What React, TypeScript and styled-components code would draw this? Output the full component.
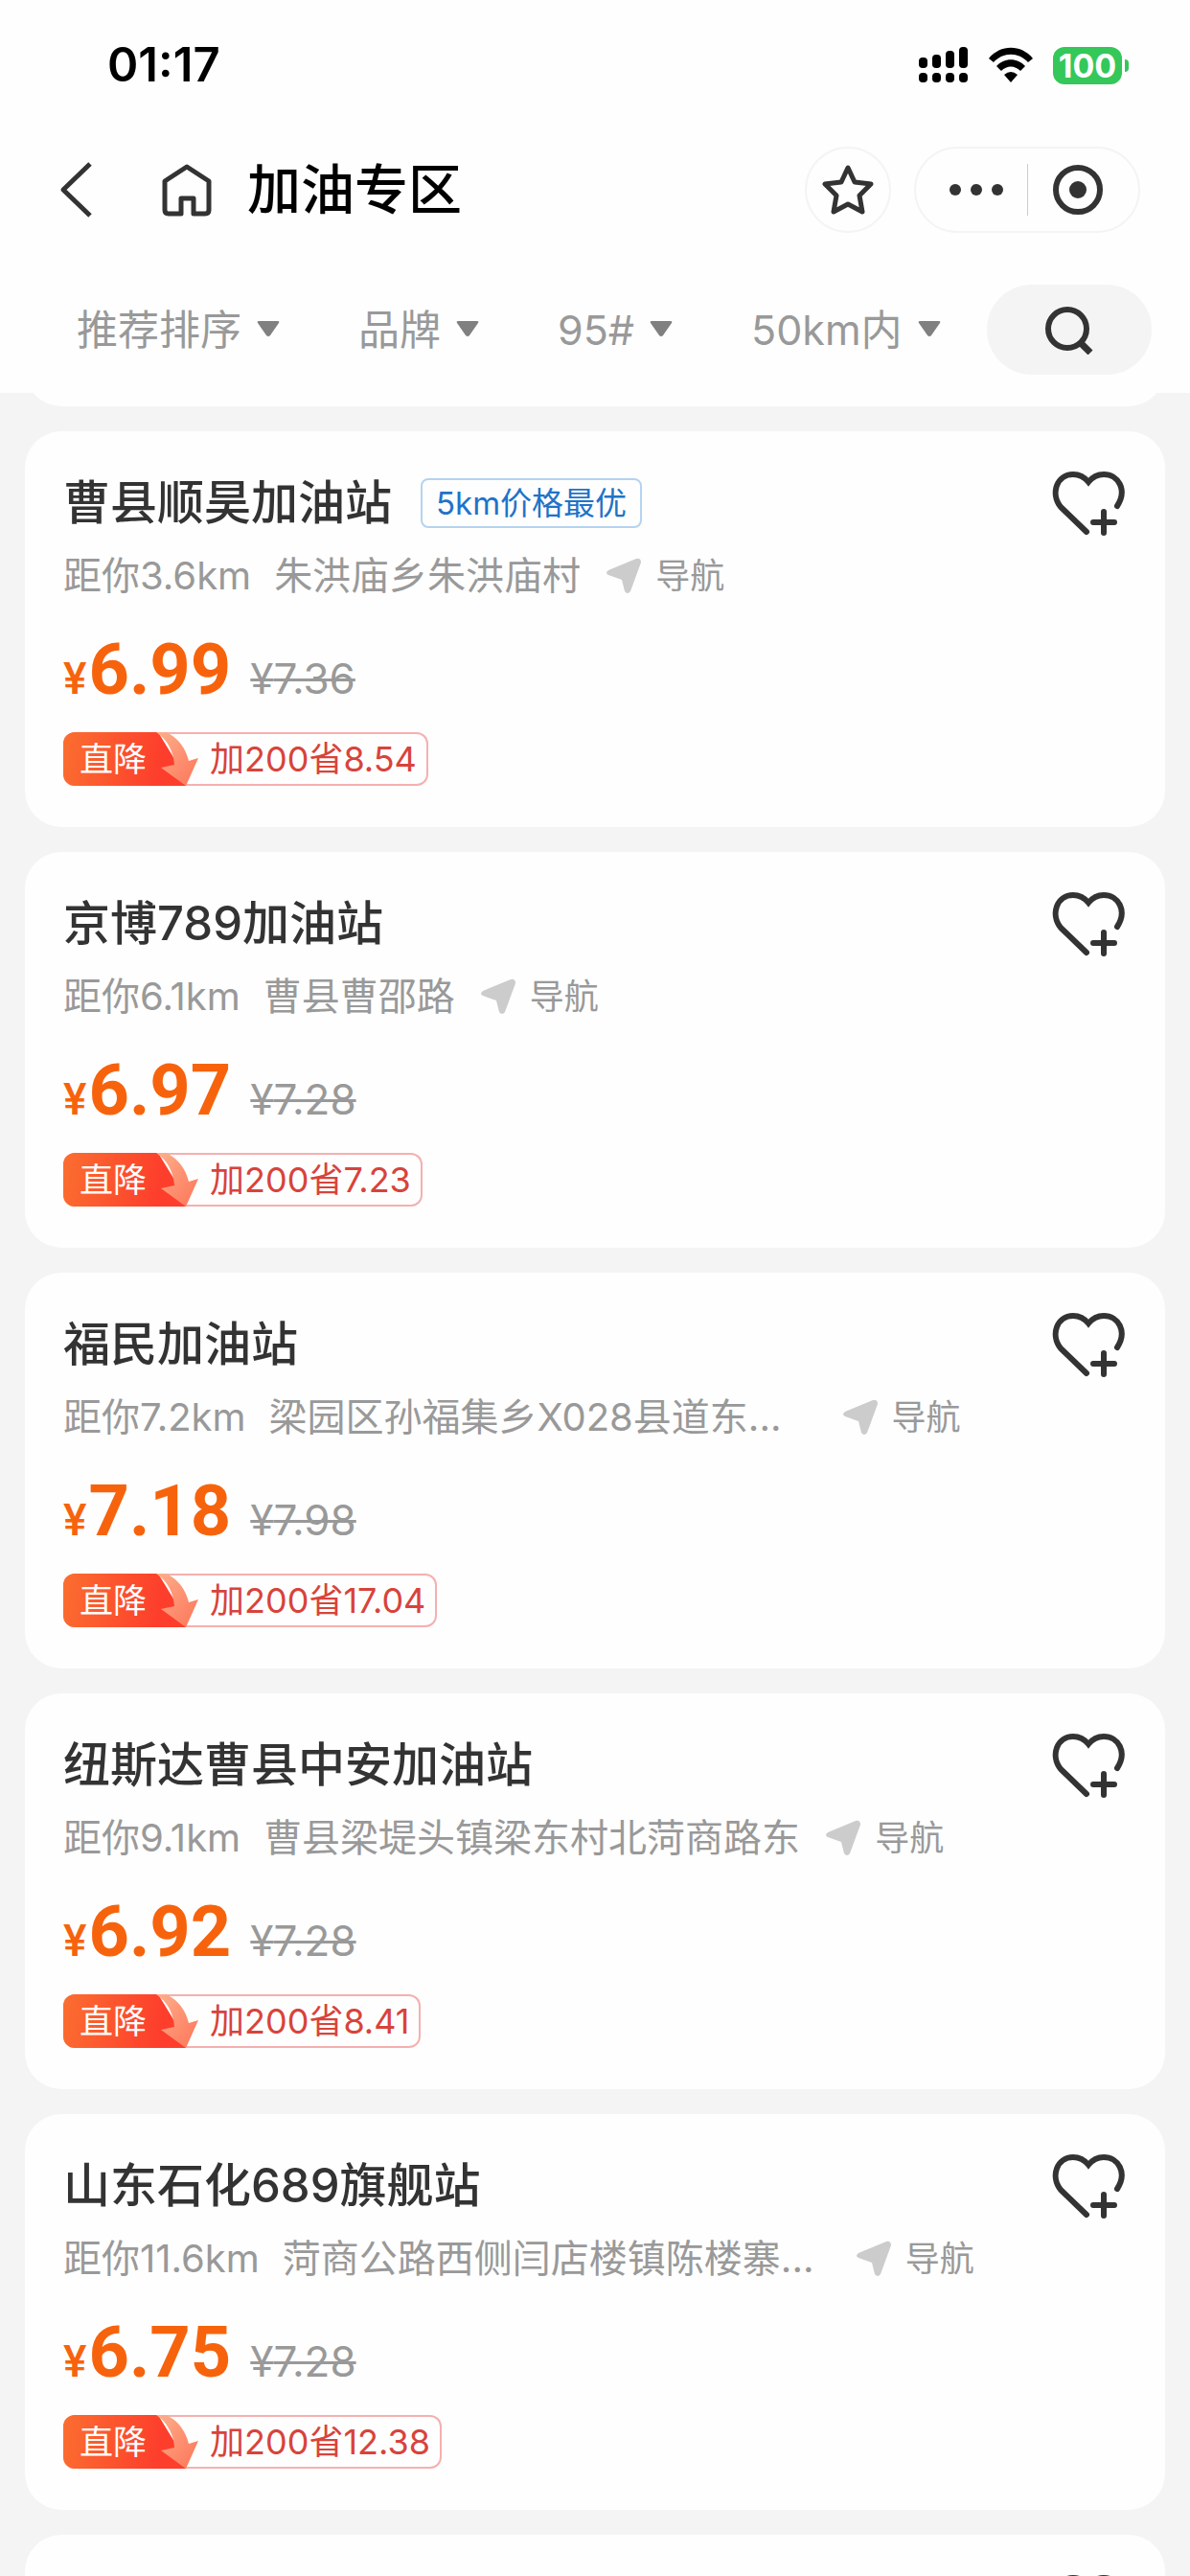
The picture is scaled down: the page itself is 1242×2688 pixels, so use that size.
import React from "react";
import styled, { createGlobalStyle } from "styled-components";

const ink = "#333333";
const muted = "#999999";
const orange = "#f7630c";

const GlobalStyle = createGlobalStyle`
  *, *::before, *::after { box-sizing: border-box; }
  body {
    margin: 0;
    background: #f4f4f4;
    color: ${ink};
    font-family: Inter, "Noto Sans CJK SC", sans-serif;
  }
  button { font: inherit; color: inherit; border: 0; padding: 0; background: none; cursor: pointer; }
  h1, h2, p { margin: 0; padding: 0; }
  svg { display: block; flex: none; }
`;

const Screen = styled.div`
  height: 100vh;
  overflow: hidden;
  display: flex;
  flex-direction: column;
`;

const Header = styled.header`
  position: sticky;
  top: 0;
  z-index: 1;
  flex: none;
  background: #fefefe;
`;

const StatusBar = styled.div`
  display: flex;
  align-items: center;
  justify-content: space-between;
  height: 136px;
  padding: 0 64px 0 112px;
`;

const Clock = styled.time`
  color: #000;
  font-size: 49px;
  font-weight: 600;
  line-height: 56px;
`;

const StatusIcons = styled.div`
  display: flex;
  align-items: center;
  gap: 20px;
`;

const Battery = styled.span`
  display: flex;
  align-items: center;
  gap: 3px;
  &::after {
    content: "";
    width: 4px;
    height: 13px;
    border-radius: 0 6px 6px 0;
    background: #34c759;
  }
`;

const BatteryLevel = styled.span`
  width: 72px;
  border-radius: 12px;
  background: #34c759;
  color: #fff;
  font-size: 34px;
  font-weight: 700;
  line-height: 39px;
  text-align: center;
`;

const TitleBar = styled.div`
  display: flex;
  align-items: center;
  height: 124px;
  padding: 0 52px 0 60px;
`;

const IconButton = styled.button`
  display: flex;
  align-items: center;
  justify-content: center;
`;

const HomeButton = styled(IconButton)`
  margin: 0 36px 0 70px;
`;

const Title = styled.h1`
  flex: 1;
  color: #000;
  font-size: 56px;
  font-weight: 500;
  line-height: 80px;
`;

const StarButton = styled(IconButton)`
  width: 90px;
  height: 90px;
  margin-right: 24px;
  border: 2px solid #f4f4f4;
  border-radius: 45px;
`;

const Capsule = styled.div`
  display: flex;
  align-items: center;
  width: 236px;
  height: 90px;
  padding: 0 10px;
  border: 2px solid #f4f4f4;
  border-radius: 45px;
`;

const CapsuleButton = styled(IconButton)`
  flex: 1;
  height: 54px;
  & + & { border-left: 1px solid #cccccc; }
`;

const Filters = styled.nav`
  display: flex;
  align-items: center;
  justify-content: space-between;
  height: 150px;
  padding: 18px 40px 0 80px;
`;

const FilterGroup = styled.div`
  display: flex;
  align-items: center;
  gap: 82px;
`;

const FilterButton = styled.button`
  display: flex;
  align-items: center;
  gap: 16px;
  color: ${muted};
  font-size: 43px;
  line-height: 60px;
  white-space: nowrap;
`;

const SearchButton = styled(IconButton)`
  flex: none;
  width: 172px;
  height: 94px;
  border-radius: 47px;
  background: #f4f4f4;
`;

const List = styled.main`
  flex: none;
  display: flex;
  flex-direction: column;
  gap: 26px;
  margin-top: -66px;
  padding: 0 26px;
`;

const Card = styled.article`
  min-height: 80px;
  padding: 35px 42px 43px 40px;
  border-radius: 38px;
  background: #fefefe;
`;

const CardHead = styled.div`
  display: flex;
  align-items: center;
  height: 80px;
`;

const Name = styled.h2`
  font-size: 49px;
  font-weight: 500;
  line-height: 72px;
`;

const BestTag = styled.span`
  margin-left: 30px;
  padding: 0 14px;
  border: 2px solid #b5d3f0;
  border-radius: 8px;
  color: #1f73c9;
  font-size: 33px;
  line-height: 48px;
`;

const FavouriteButton = styled(IconButton)`
  margin-left: auto;
`;

const Place = styled.div`
  display: flex;
  align-items: center;
  height: 72px;
  color: ${muted};
  font-size: 40px;
  line-height: 56px;
  white-space: nowrap;
`;

const Address = styled.span<{ $cut?: boolean }>`
  min-width: ${(p) => (p.$cut ? "572px" : "0")};
  margin: 0 26px 0 24px;
`;

const NavButton = styled.button`
  display: flex;
  align-items: center;
  gap: 14px;
  font-size: 36px;
`;

const Prices = styled.p`
  display: flex;
  align-items: baseline;
  height: 96px;
  margin-top: 14px;
  line-height: 96px;
  font-family: Roboto, sans-serif;
`;

const Currency = styled.span`
  margin-right: 2px;
  color: ${orange};
  font-size: 46px;
  font-weight: 500;
`;

const Price = styled.strong`
  margin-right: 20px;
  color: ${orange};
  font-size: 74px;
  font-weight: 700;
`;

const OldPrice = styled.s`
  color: ${muted};
  font-family: Inter, sans-serif;
  font-size: 44px;
  text-decoration-thickness: 3px;
`;

const Saving = styled.div`
  display: flex;
  align-items: center;
  width: fit-content;
  height: 56px;
  margin-top: 17px;
  border-radius: 12px;
  box-shadow: inset 0 0 0 2px #f5b0b0;
  color: #d8433b;
  font-size: 36px;
`;

const DropLabel = styled.span`
  display: flex;
  height: 56px;
  padding-left: 17px;
  border-radius: 12px 0 0 12px;
  background: linear-gradient(100deg, #fb6e30, #fd3e2c 70%);
  color: #fff;
  font-size: 35px;
  line-height: 56px;
`;

const SavingText = styled.span`
  padding: 0 12px 0 10px;
  line-height: 56px;
`;

const Triangle = () => (
  <svg width="24" height="18" viewBox="0 0 24 18" aria-hidden="true">
    <path d="M2 0H22Q24 0 23 2L14 15Q12 17 10 15L1 2Q0 0 2 0Z" fill="#808080" />
  </svg>
);

const HeartPlus = () => (
  <svg width="76" height="68" viewBox="0 0 76 68" fill="none" stroke={ink} strokeWidth="6" strokeLinecap="round">
    <path d="M36 64L9 38C-2 24 5 4 22 4C29 4 34 7 38 12C42 7 47 4 54 4C69 4 79 20 68 37" />
    <path d="M54 43V65M43 54H65" />
  </svg>
);

const Plane = () => (
  <svg width="38" height="38" viewBox="0 0 38 38" aria-hidden="true">
    <path d="M3 13L32 1Q37 0 37 5L26 35Q23 39 20 35L17 23L3 18Q-1 16 3 13Z" fill="#cccccc" />
  </svg>
);

const DropArrow = () => (
  <svg width="56" height="56" viewBox="0 0 56 56" aria-hidden="true">
    <defs>
      <linearGradient id="arrow" x1="0" y1="0" x2="1" y2="1">
        <stop offset="0" stopColor="#fdb08c" />
        <stop offset="1" stopColor="#fd7458" />
      </linearGradient>
    </defs>
    <path d="M12 0H56V56H41L34 36Z" fill="#fefefe" />
    <path d="M14 1H56M41 55H56" stroke="#f5b0b0" strokeWidth="2" />
    <path d="M10 0H20C34 6 41 18 44 30L54 27L41 56L15 37L29 34C28 20 22 8 10 0Z" fill="url(#arrow)" />
  </svg>
);

interface Station {
  name: string;
  tag?: string;
  distance: string;
  address: string;
  cut?: boolean;
  price: string;
  oldPrice: string;
  saving: string;
}

const stations: Station[] = [
  { name: "曹县顺昊加油站", tag: "5km价格最优", distance: "3.6", address: "朱洪庙乡朱洪庙村", price: "6.99", oldPrice: "7.36", saving: "8.54" },
  { name: "京博789加油站", distance: "6.1", address: "曹县曹邵路", price: "6.97", oldPrice: "7.28", saving: "7.23" },
  { name: "福民加油站", distance: "7.2", address: "梁园区孙福集乡X028县道东...", cut: true, price: "7.18", oldPrice: "7.98", saving: "17.04" },
  { name: "纽斯达曹县中安加油站", distance: "9.1", address: "曹县梁堤头镇梁东村北菏商路东", price: "6.92", oldPrice: "7.28", saving: "8.41" },
  { name: "山东石化689旗舰站", distance: "11.6", address: "菏商公路西侧闫店楼镇陈楼寨...", cut: true, price: "6.75", oldPrice: "7.28", saving: "12.38" },
];

const Favourite = () => (
  <FavouriteButton aria-label="收藏">
    <HeartPlus />
  </FavouriteButton>
);

const StationCard = ({ s }: { s: Station }) => (
  <Card>
    <CardHead>
      <Name>{s.name}</Name>
      {s.tag && <BestTag>{s.tag}</BestTag>}
      <Favourite />
    </CardHead>
    <Place>
      <span>距你{s.distance}km</span>
      <Address $cut={s.cut}>{s.address}</Address>
      <NavButton>
        <Plane />
        导航
      </NavButton>
    </Place>
    <Prices>
      <Currency>¥</Currency>
      <Price>{s.price}</Price>
      <OldPrice>¥{s.oldPrice}</OldPrice>
    </Prices>
    <Saving>
      <DropLabel>直降<DropArrow /></DropLabel>
      <SavingText>加200省{s.saving}</SavingText>
    </Saving>
  </Card>
);

export default function App() {
  return (
    <Screen>
      <GlobalStyle />
      <Header>
        <StatusBar>
          <Clock>01:17</Clock>
          <StatusIcons>
            <svg width="52" height="38" viewBox="0 0 52 38" aria-hidden="true">
              {[11, 8, 4, 0].map((top, i) => (
                <g key={top}>
                  <rect x={i * 14} y={top} width="9" height={22 - top} rx="4" />
                  <rect x={i * 14} y="27" width="9" height="10" rx="4" />
                </g>
              ))}
            </svg>
            <svg width="48" height="38" viewBox="0 0 48 38" aria-hidden="true">
              <path d="M1 12C13 -3 35 -3 47 12L42 16C32 5 16 5 6 16Z" />
              <path d="M9 20C17 11 31 11 39 20L34 25C28 19 20 19 14 25Z" />
              <path d="M17 29Q24 23 31 29L24 37Z" />
            </svg>
            <Battery>
              <BatteryLevel>100</BatteryLevel>
            </Battery>
          </StatusIcons>
        </StatusBar>
        <TitleBar>
          <IconButton aria-label="返回">
            <svg width="38" height="60" viewBox="0 0 38 60" fill="none" stroke={ink} strokeWidth="5">
              <path d="M34 3L6 30L34 57" strokeLinejoin="round" />
            </svg>
          </IconButton>
          <HomeButton aria-label="首页">
            <svg width="54" height="56" viewBox="0 0 54 56" fill="none" stroke={ink} strokeWidth="5" strokeLinejoin="round">
              <path d="M4 19L27 4L50 19V49Q50 53 46 53H34V37H21V53H8Q4 53 4 49Z" />
            </svg>
          </HomeButton>
          <Title>加油专区</Title>
          <StarButton aria-label="收藏">
            <svg width="54" height="54" viewBox="0 0 54 54" fill="none" stroke={ink} strokeWidth="5" strokeLinejoin="round">
              <path d="M27 4L34 19L51 21L39 33L42 50L27 42L12 50L15 33L3 21L20 19Z" />
            </svg>
          </StarButton>
          <Capsule>
            <CapsuleButton aria-label="更多">
              <svg width="58" height="14" viewBox="0 0 58 14" fill={ink}>
                <circle cx="7" cy="7" r="6" />
                <circle cx="29" cy="7" r="6" />
                <circle cx="51" cy="7" r="6" />
              </svg>
            </CapsuleButton>
            <CapsuleButton aria-label="关闭">
              <svg width="54" height="54" viewBox="0 0 54 54">
                <circle cx="27" cy="27" r="23" fill="none" stroke={ink} strokeWidth="6" />
                <circle cx="27" cy="27" r="9" fill={ink} />
              </svg>
            </CapsuleButton>
          </Capsule>
        </TitleBar>
        <Filters>
          <FilterGroup>
            {["推荐排序", "品牌", "95#", "50km内"].map((label) => (
              <FilterButton key={label}>
                {label}
                <Triangle />
              </FilterButton>
            ))}
          </FilterGroup>
          <SearchButton aria-label="搜索">
            <svg width="52" height="52" viewBox="0 0 52 52" fill="none" stroke={ink} strokeWidth="6">
              <circle cx="24" cy="25" r="20" />
              <path d="M38 40L48 50" strokeWidth="7" />
            </svg>
          </SearchButton>
        </Filters>
      </Header>
      <List>
        <Card />
        {stations.map((s) => (
          <StationCard key={s.name} s={s} />
        ))}
        <Card>
          <CardHead>
            <Favourite />
          </CardHead>
        </Card>
      </List>
    </Screen>
  );
}
